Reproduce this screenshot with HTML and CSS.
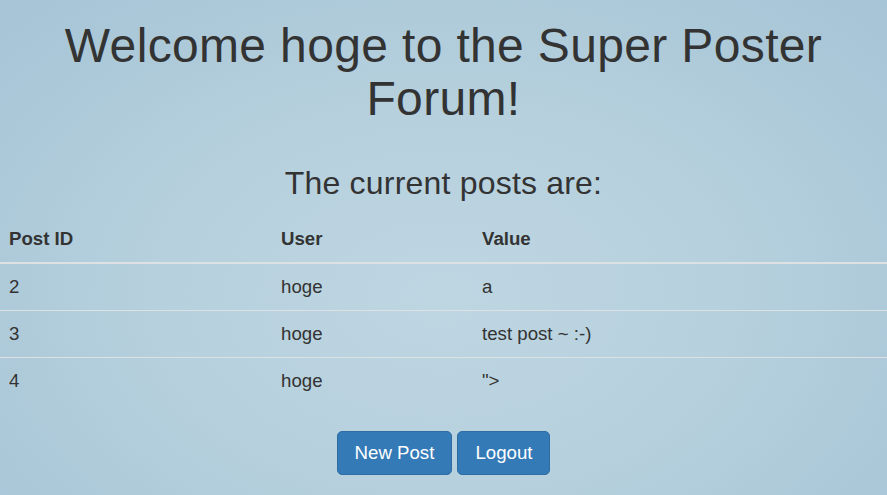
FILE: index.html
```html
<!DOCTYPE html>
<html>
<head>
<meta charset="utf-8">
<title>Super Poster Forum</title>
<link rel="stylesheet" href="styles.css">
</head>
<body>
<div class="page">
  <h1 class="title">Welcome hoge to the Super Poster Forum!</h1>
  <h2 class="subtitle">The current posts are:</h2>
  <table class="posts">
    <thead>
      <tr><th class="c1">Post ID</th><th class="c2">User</th><th>Value</th></tr>
    </thead>
    <tbody>
      <tr><td>2</td><td>hoge</td><td>a</td></tr>
      <tr><td>3</td><td>hoge</td><td>test post ~ :-)</td></tr>
      <tr><td>4</td><td>hoge</td><td>"&gt;</td></tr>
    </tbody>
  </table>
  <div class="actions">
    <a class="btn" href="#">New Post</a>
    <a class="btn" href="#">Logout</a>
  </div>
</div>
</body>
</html>
```
FILE: styles.css
```css
html, body {
  margin: 0;
  padding: 0;
  height: 100%;
}
body {
  font-family: "Liberation Sans", Arial, sans-serif;
  font-size: 18.67px;
  color: #333;
  background: radial-gradient(ellipse at 50% 60%, #bed6e2 0%, #b6d0dd 45%, #a5c4d6 100%);
  min-height: 495px;
}
.page {
  display: flex;
  flex-direction: column;
}
.title {
  font-size: 48px;
  font-weight: 400;
  line-height: 1.1;
  letter-spacing: 0.35px;
  text-align: center;
  margin: 20px 0 0;
  padding: 0 40px;
}
.subtitle {
  font-size: 32px;
  font-weight: 400;
  line-height: 1.1;
  letter-spacing: 0.2px;
  text-align: center;
  margin: 40px 0 14px;
}
.posts {
  width: 100%;
  border-collapse: separate;
  border-spacing: 0;
  table-layout: fixed;
}
.posts th, .posts td {
  text-align: left;
  padding: 10px 9px;
  vertical-align: middle;
}
.posts th {
  font-weight: 700;
  line-height: 27px;
  border-bottom: 2px solid #dde1e3;
}
.posts td {
  line-height: 26px;
  border-top: 1px solid #dde1e3;
}
.posts tbody tr:first-child td {
  border-top: 0;
}
.posts .c1 { width: 254px; }
.posts .c2 { width: 183px; }
.actions {
  display: flex;
  justify-content: center;
  gap: 5px;
  margin-top: 27px;
}
.btn {
  display: inline-block;
  box-sizing: border-box;
  height: 44px;
  padding: 8px 17px;
  line-height: 26px;
  font-size: 18.67px;
  color: #fff;
  text-decoration: none;
  background: #337ab7;
  border: 1px solid #2e6da4;
  border-radius: 5px;
}
```
